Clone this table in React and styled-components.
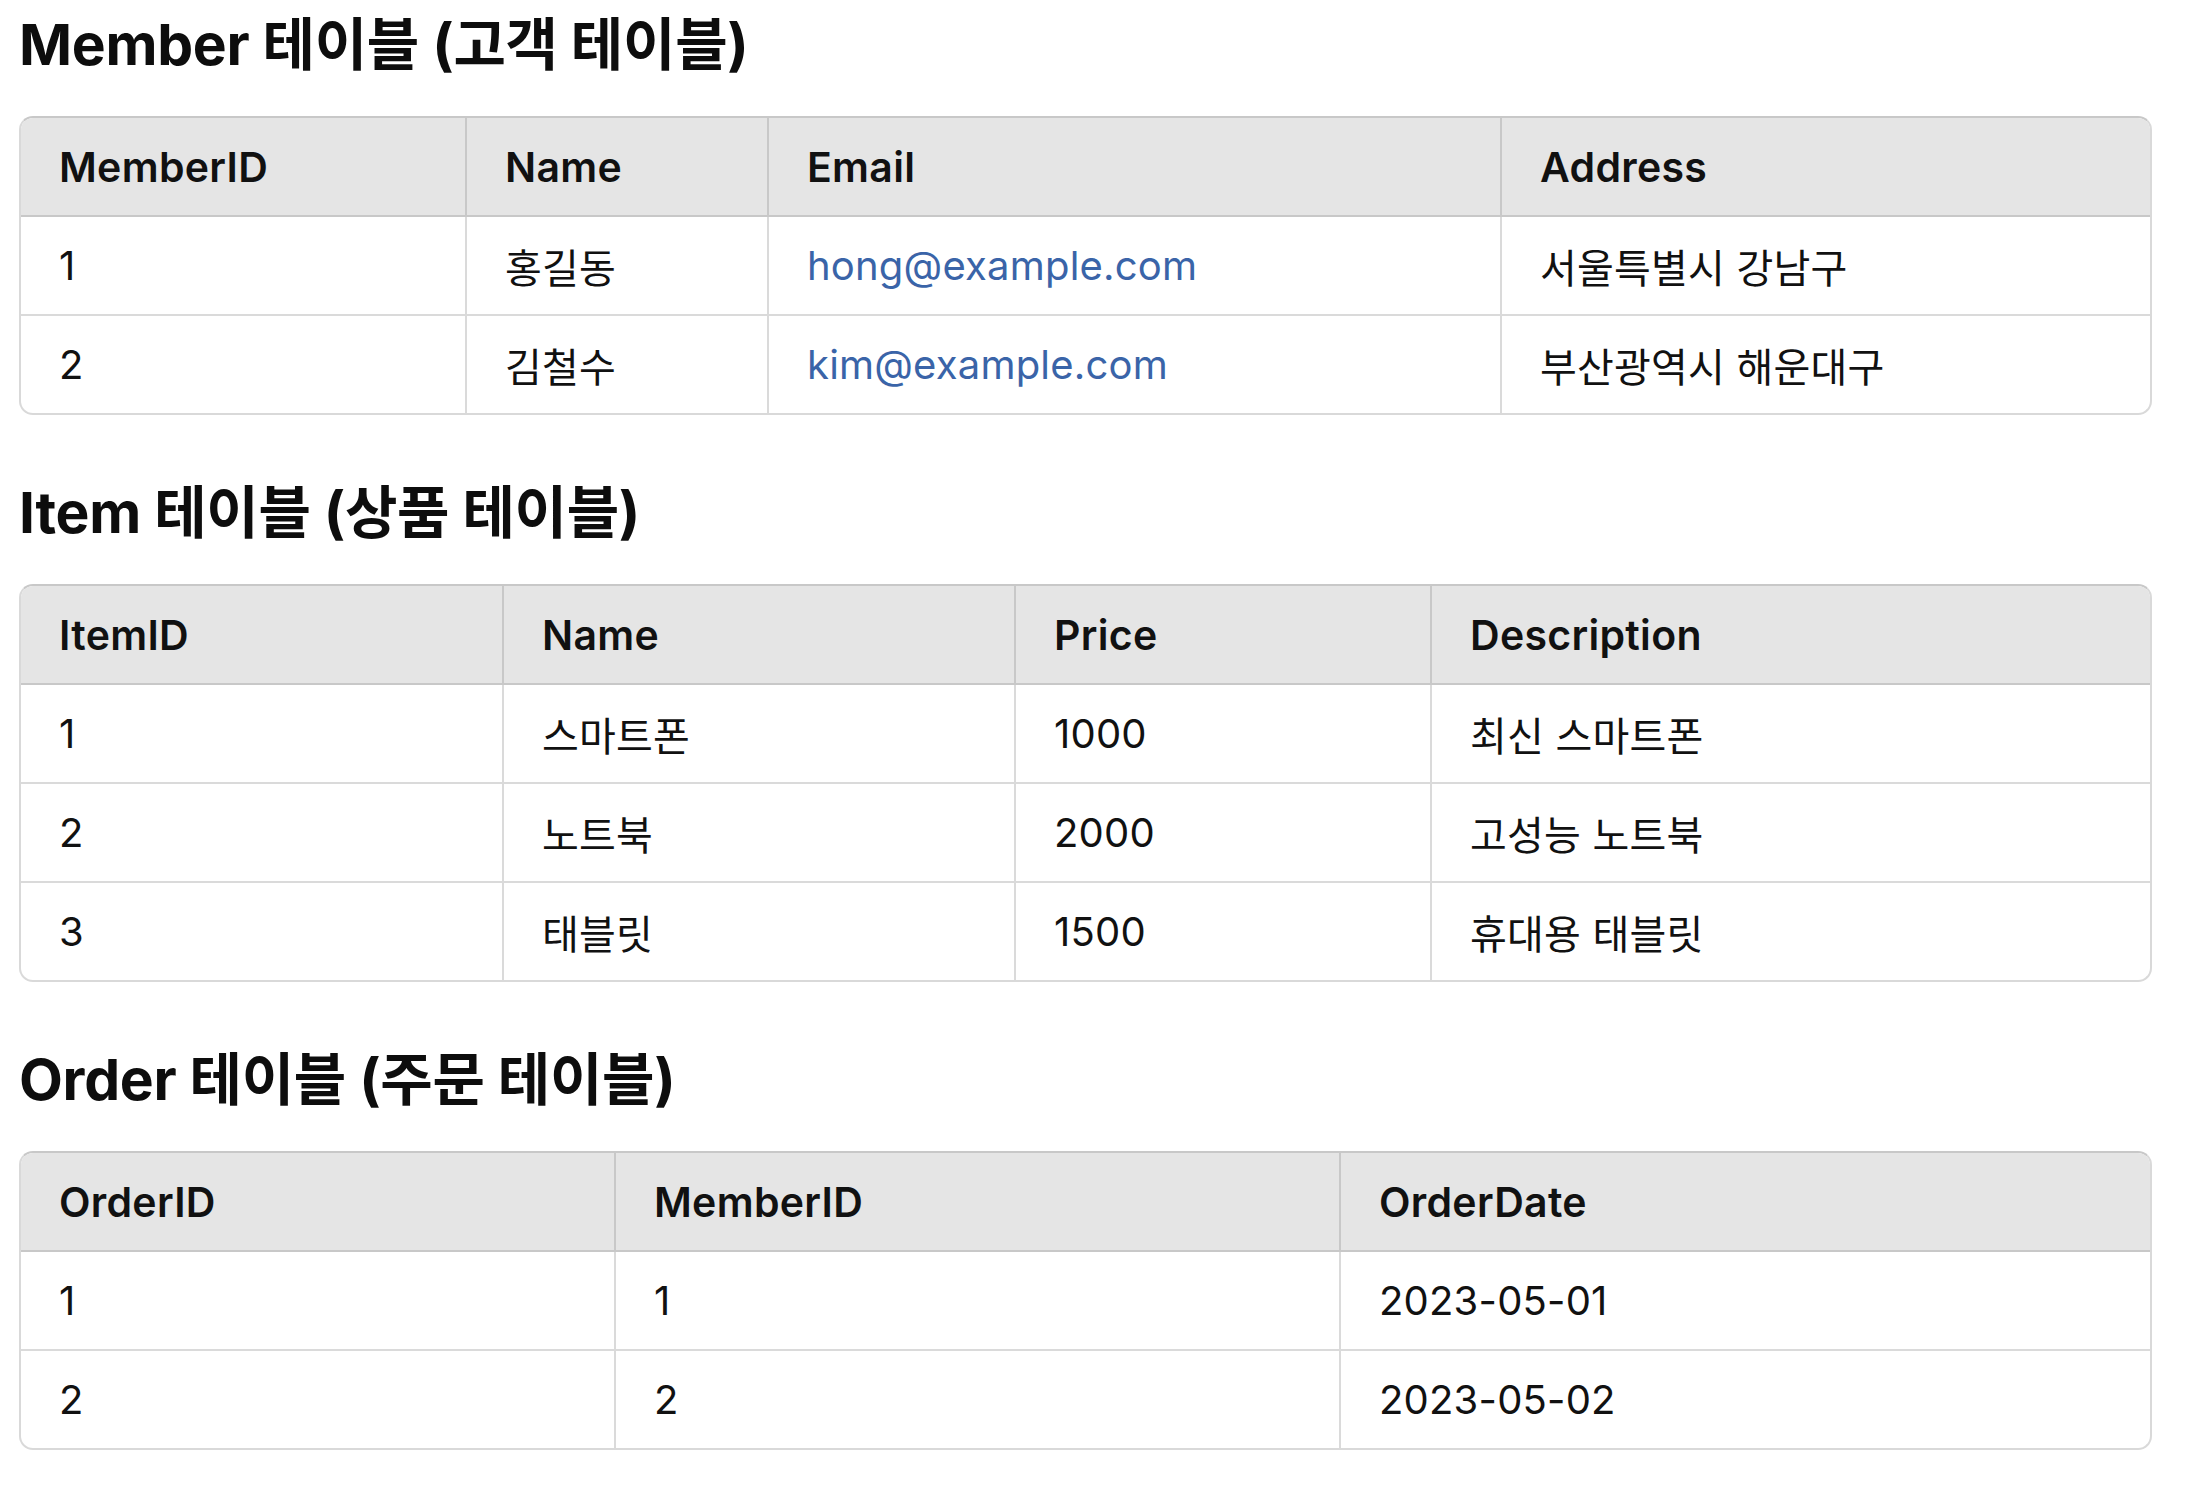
import React from "react";
import styled, { createGlobalStyle } from "styled-components";

const GlobalStyle = createGlobalStyle`
  html, body {
    margin: 0;
    padding: 0;
    background: #ffffff;
  }
  body {
    font-family: Inter, "Noto Sans CJK KR", sans-serif;
    color: #0d0d0d;
  }
`;

const Page = styled.div`
  width: 2133px;
  margin-left: 19px;
  padding-top: 10px;
  padding-bottom: 40px;
`;

const Section = styled.section`
  & + & {
    margin-top: 63px;
  }
`;

const Title = styled.h2`
  margin: 0 0 36px 0;
  font-size: 57px;
  line-height: 70px;
  font-weight: 700;
  letter-spacing: -0.3px;
  color: #0d0d0d;
`;

const TableWrap = styled.div`
  border: 2px solid #d9d9d9;
  border-top-color: #c8c8c8;
  border-radius: 14px;
  overflow: hidden;
`;

const Table = styled.table`
  width: 100%;
  table-layout: fixed;
  border-collapse: separate;
  border-spacing: 0;
`;

const Col = styled.col`
  width: ${(p) => (p.$w ? `${p.$w}px` : "auto")};
`;

const Th = styled.th`
  height: 97px;
  padding: 0 38px;
  text-align: left;
  vertical-align: middle;
  font-size: 41px;
  font-weight: 600;
  letter-spacing: 0.3px;
  color: #111111;
  background: #e5e5e5;
  border-bottom: 2px solid #c8c8c8;
  border-right: 2px solid #c8c8c8;
  &:last-child {
    border-right: none;
  }
`;

const Td = styled.td`
  height: 97px;
  padding: 0 38px;
  vertical-align: middle;
  font-size: 40px;
  font-weight: 400;
  letter-spacing: 0.2px;
  color: #111111;
  border-bottom: 2px solid #dadada;
  border-right: 2px solid #dadada;
  &:last-child {
    border-right: none;
  }
  tr:last-child > & {
    border-bottom: none;
  }
`;

const Link = styled.a`
  color: #3a64a8;
  text-decoration: none;
`;

const tables = [
  {
    title: "Member 테이블 (고객 테이블)",
    widths: [446, 302, 733],
    head: ["MemberID", "Name", "Email", "Address"],
    rows: [
      ["1", "홍길동", { mail: "hong@example.com" }, "서울특별시 강남구"],
      ["2", "김철수", { mail: "kim@example.com" }, "부산광역시 해운대구"],
    ],
  },
  {
    title: "Item 테이블 (상품 테이블)",
    widths: [483, 512, 416],
    head: ["ItemID", "Name", "Price", "Description"],
    rows: [
      ["1", "스마트폰", "1000", "최신 스마트폰"],
      ["2", "노트북", "2000", "고성능 노트북"],
      ["3", "태블릿", "1500", "휴대용 태블릿"],
    ],
  },
  {
    title: "Order 테이블 (주문 테이블)",
    widths: [595, 725],
    head: ["OrderID", "MemberID", "OrderDate"],
    rows: [
      ["1", "1", "2023-05-01"],
      ["2", "2", "2023-05-02"],
    ],
  },
];

const Cell = ({ value }) =>
  typeof value === "object" ? (
    <Td>
      <Link href={`mailto:${value.mail}`}>{value.mail}</Link>
    </Td>
  ) : (
    <Td>{value}</Td>
  );

const DataTable = ({ title, widths, head, rows }) => (
  <Section>
    <Title>{title}</Title>
    <TableWrap>
      <Table>
        <colgroup>
          {head.map((h, i) => (
            <Col key={h} $w={widths[i]} />
          ))}
        </colgroup>
        <thead>
          <tr>
            {head.map((h) => (
              <Th key={h}>{h}</Th>
            ))}
          </tr>
        </thead>
        <tbody>
          {rows.map((row, r) => (
            <tr key={r}>
              {row.map((v, c) => (
                <Cell key={c} value={v} />
              ))}
            </tr>
          ))}
        </tbody>
      </Table>
    </TableWrap>
  </Section>
);

const App = () => (
  <>
    <GlobalStyle />
    <Page>
      {tables.map((t) => (
        <DataTable key={t.title} {...t} />
      ))}
    </Page>
  </>
);

export default App;
